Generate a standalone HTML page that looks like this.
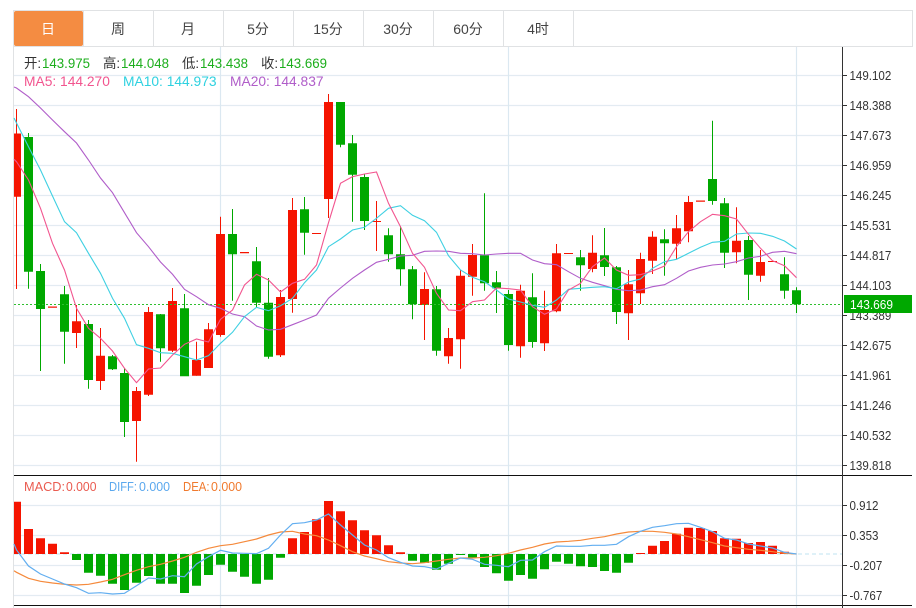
<!DOCTYPE html>
<html><head><meta charset="utf-8"><style>
html,body{margin:0;padding:0;background:#fff;width:916px;height:608px;overflow:hidden}
svg{position:absolute;left:0;top:0;display:block}
text{font-family:"Liberation Sans","Noto Sans CJK SC",sans-serif}
.tab{font-size:14px;fill:#444;text-anchor:middle;font-family:"Liberation Sans","Noto Sans CJK SC",sans-serif}
.ax{font-size:13px;fill:#333}
.h{font-size:13.4px;fill:#333}
.g{font-size:14px;fill:#1cae1c}
.m{font-size:13.8px}
.d{font-size:13px}
</style></head><body>
<svg width="916" height="608" viewBox="0 0 916 608" xmlns="http://www.w3.org/2000/svg">
<rect x="13" y="10" width="900" height="37" fill="#fff"/>
<path d="M13.5 10V608M13 10.5H912.5V46.5H13M83.5 10V46M153.5 10V46M223.5 10V46M293.5 10V46M363.5 10V46M433.5 10V46M503.5 10V46M573.5 10V46" fill="none" stroke="#e0e2e4"/>
<rect x="14" y="11" width="69" height="35" rx="2" fill="#f48c42"/>
<text class="tab" x="48" y="34" style="fill:#fff">日</text>
<text class="tab" x="118" y="34">周</text>
<text class="tab" x="188" y="34">月</text>
<text class="tab" x="258" y="34">5分</text>
<text class="tab" x="328" y="34">15分</text>
<text class="tab" x="398" y="34">30分</text>
<text class="tab" x="468" y="34">60分</text>
<text class="tab" x="538" y="34">4时</text>

<path d="M14 75.5H842M14 105.5H842M14 135.5H842M14 165.5H842M14 195.5H842M14 225.5H842M14 255.5H842M14 285.5H842M14 315.5H842M14 345.5H842M14 375.5H842M14 405.5H842M14 435.5H842M14 465.5H842M14 505.5H842M14 535.5H842M14 565.5H842M14 595.5H842" stroke="#e3ebf2" stroke-width="1.2" fill="none"/>
<path d="M220.5 47V608M508.5 47V608M796.5 47V608" stroke="#dbe8f1" stroke-width="1.2" fill="none"/>

<text class="h" x="24" y="68">开:</text><text class="g" x="42" y="68" textLength="48" lengthAdjust="spacingAndGlyphs">143.975</text>
<text class="h" x="103" y="68">高:</text><text class="g" x="121" y="68" textLength="48" lengthAdjust="spacingAndGlyphs">144.048</text>
<text class="h" x="182" y="68">低:</text><text class="g" x="200" y="68" textLength="48" lengthAdjust="spacingAndGlyphs">143.438</text>
<text class="h" x="261" y="68">收:</text><text class="g" x="279" y="68" textLength="48" lengthAdjust="spacingAndGlyphs">143.669</text>
<text class="m" x="24" y="86" fill="#f2558f">MA5: 144.270</text>
<text class="m" x="123" y="86" fill="#2ed1e0">MA10: 144.973</text>
<text class="m" x="230" y="86" fill="#b05dc9">MA20: 144.837</text>

<path fill="none" stroke="#f51400" d="M16.5 109V289M76.5 305V348M100.5 328V390M136.5 387V461.7M148.5 307V396M172.5 288V352M196.5 341.7V375.7M208.5 323V368M220.5 216.7V336.7M280.5 290V357M292.5 198V312.7M328.5 94V218M376.5 201V251M424.5 272.3V340M448.5 328V363.7M460.5 270V368.7M472.5 244V295.7M520.5 284.7V357.7M544.5 290.7V351M556.5 244V312.3M592.5 235.3V272.3M628.5 270V340M640.5 252.7V304M652.5 231.3V274M676.5 215V259M688.5 196V242.3M736.5 207.3V263.3M760.5 250V281.7"/>
<path fill="#f51400" d="M14 133.5H21V196.7H14zM72 321.3h9V333h-9zM96 355.7h9V381h-9zM132 391h9V421h-9zM144 312h9V394.7h-9zM168 301h9V350.7h-9zM192 360h9V375.7h-9zM204 329.3h9V368h-9zM216 234h9V335h-9zM276 297h9V355.3h-9zM288 210h9V299h-9zM324 102h9V199h-9zM420 289h9V305h-9zM444 338h9V356.3h-9zM456 275.7h9V339.3h-9zM468 255h9V276.7h-9zM516 290.7h9V346.3h-9zM540 310h9V343.3h-9zM552 253.3h9V311.3h-9zM588 252.7h9V269h-9zM624 284.3h9V313.3h-9zM636 259h9V293.3h-9zM648 236.7h9V260.7h-9zM672 228.3h9V243.7h-9zM684 202h9V231.3h-9zM732 240.7h9V252.3h-9zM756 262h9V275.7h-9zM48 306.5h9V307.8h-9zM240 252h9V253.2h-9zM312 233h9V234h-9zM372 221h9V222h-9zM564 253h9V254h-9zM696 200.5h9V201.8h-9zM768 261h9V262h-9z"/>
<path fill="none" stroke="#00a800" d="M28.5 133V288.7M40.5 264V371M64.5 286V363.7M88.5 320V388.7M112.5 355V370M124.5 368V437M160.5 314V361.7M184.5 294V376M232.5 209V300.7M256.5 247V308M268.5 278V358.7M304.5 197V254.7M340.5 102V147.3M352.5 135V221.7M364.5 174V230M388.5 228.3V261.7M400.5 226V285.7M412.5 266V319.3M436.5 286V355.7M484.5 193.3V290.7M496.5 271V313M508.5 290V350.7M532.5 273.3V347.7M580.5 250V290.7M604.5 228V276M616.5 266V324M664.5 229.3V275.7M712.5 120.7V204.7M724.5 198V268M748.5 236V300M784.5 257.3V298.7M796.5 287.3V313"/>
<path fill="#00a800" d="M24 137h9V271.7h-9zM36 271h9V309h-9zM60 294.3h9V331.7h-9zM84 324h9V380h-9zM108 356.3h9V369.3h-9zM120 373h9V422h-9zM156 314.3h9V348.3h-9zM180 308.3h9V376.3h-9zM228 234h9V254.3h-9zM252 261.3h9V302.7h-9zM264 302.7h9V356.7h-9zM300 209.3h9V232.7h-9zM336 102h9V144.7h-9zM348 143.3h9V174.7h-9zM360 177h9V221h-9zM384 235.3h9V254.3h-9zM396 254.3h9V269.3h-9zM408 269.3h9V304.3h-9zM432 289.3h9V350.7h-9zM480 255.3h9V283.3h-9zM492 282.3h9V288.3h-9zM504 294h9V345h-9zM528 297.3h9V342h-9zM576 257.3h9V265.3h-9zM600 255.3h9V267h-9zM612 267.3h9V312h-9zM660 239.3h9V243.3h-9zM708 179h9V201h-9zM720 203.3h9V252.7h-9zM744 240h9V274.7h-9zM780 274.3h9V290.7h-9zM792 290.3h9V304.3h-9z"/>

<path d="M14 304.5H842" stroke="#2fbf2f" stroke-dasharray="2 2" fill="none"/>

<polyline fill="none" stroke="#b05dc9" stroke-width="1.1" points="14,87 16.5,88 28.5,96.7 40.5,108 52.5,120 64.5,131.7 76.5,143 88.5,160 100.5,178 112.5,192.7 124.5,212.7 136.5,232.7 148.5,246.7 160.5,262 172.5,274.3 184.5,289.3 196.5,296.7 208.5,304.7 220.5,308.3 232.5,314 244.5,316.7 256.5,326 268.5,330 280.5,329.3 292.5,324.7 304.5,320 316.5,315 328.5,298.3 340.5,288 352.5,278.3 364.5,270 376.5,262.3 388.5,259.3 400.5,256 412.5,255.3 424.5,251.3 436.5,251 448.5,251.3 460.5,253.3 472.5,253.7 484.5,255 496.5,254 508.5,253.3 520.5,253.3 532.5,260 544.5,263.7 556.5,264.7 568.5,271.7 580.5,278.3 592.5,282.3 604.5,285.7 616.5,289.3 628.5,290.7 640.5,290 652.5,286.7 664.5,284.7 676.5,278.3 688.5,271 700.5,267.3 712.5,265 724.5,264 736.5,261.7 748.5,258 760.5,256.3 772.5,252.3 784.5,251.3 796.5,253.7"/>
<polyline fill="none" stroke="#3fd0e2" stroke-width="1.1" points="14,118 16.5,123 28.5,146.7 40.5,170 52.5,196 64.5,221.7 76.5,232.7 88.5,253.3 100.5,273.3 112.5,298.3 124.5,318.3 136.5,344.7 148.5,348.3 160.5,352.7 172.5,353.3 184.5,356.7 196.5,360 208.5,355.7 220.5,343.3 232.5,332.3 244.5,316.7 256.5,307.3 268.5,310.7 280.5,305.7 292.5,298.3 304.5,282.7 316.5,270 328.5,246.7 340.5,239 352.5,230 364.5,227.3 376.5,218.3 388.5,208.3 400.5,205.7 412.5,215.3 424.5,220.7 436.5,232.3 448.5,255.7 460.5,270 472.5,277.3 484.5,281.7 496.5,290 508.5,299 520.5,302 532.5,305.3 544.5,307.3 556.5,300 568.5,289.3 580.5,288.3 592.5,287.3 604.5,286.7 616.5,288.7 628.5,282 640.5,279 652.5,268.3 664.5,261.7 676.5,259.3 688.5,253.3 700.5,247.3 712.5,242.3 724.5,241.3 736.5,234 748.5,233 760.5,233.3 772.5,236.3 784.5,241 796.5,249"/>
<polyline fill="none" stroke="#f2558f" stroke-width="1.1" points="14,159.3 16.5,161.7 28.5,180 40.5,208.3 52.5,243.3 64.5,270 76.5,308.3 88.5,328.3 100.5,338.3 112.5,351 124.5,368.3 136.5,382.7 148.5,369 160.5,368 172.5,355 184.5,344.3 196.5,339 208.5,342 220.5,319.3 232.5,310 244.5,285 256.5,274.3 268.5,280 280.5,292 292.5,283.3 304.5,279.3 316.5,265 328.5,222.7 340.5,183.3 352.5,176.7 364.5,174 376.5,172 388.5,203.3 400.5,226.7 412.5,253.3 424.5,267.3 436.5,293.3 448.5,310 460.5,310.7 472.5,301.7 484.5,300 496.5,288 508.5,288.7 520.5,290 532.5,306.7 544.5,314.3 556.5,309 568.5,290 580.5,283.3 592.5,266.7 604.5,258 616.5,270 628.5,275.3 640.5,274.7 652.5,271 664.5,266 676.5,246.7 688.5,231.7 700.5,221.7 712.5,214.3 724.5,215.7 736.5,219 748.5,234.3 760.5,248.3 772.5,260.7 784.5,265.7 796.5,277.7"/>

<path d="M14 554H842" stroke="#bfe3f0" stroke-dasharray="4 3" fill="none"/>
<path fill="#f51400" d="M14 501.7H21V554H14zM24 529h9V554h-9zM36 538.3h9V554h-9zM48 543.7h9V554h-9zM60 552.3h9V554h-9zM288 538.3h9V554h-9zM300 532h9V554h-9zM312 519.3h9V554h-9zM324 501h9V554h-9zM336 511.3h9V554h-9zM348 520.3h9V554h-9zM360 530.3h9V554h-9zM372 535.3h9V554h-9zM384 545.3h9V554h-9zM396 552.3h9V554h-9zM636 553h9V554h-9zM648 545.7h9V554h-9zM660 541h9V554h-9zM672 533.7h9V554h-9zM684 527.7h9V554h-9zM696 528h9V554h-9zM708 531h9V554h-9zM720 538.3h9V554h-9zM732 538.7h9V554h-9zM744 543h9V554h-9zM756 542h9V554h-9zM768 545.7h9V554h-9zM780 551.7h9V554h-9z"/>
<path fill="#00a800" d="M72 554h9V560h-9zM84 554h9V572.7h-9zM96 554h9V575.7h-9zM108 554h9V583.7h-9zM120 554h9V590h-9zM132 554h9V582.7h-9zM144 554h9V576h-9zM156 554h9V583.7h-9zM168 554h9V583.7h-9zM180 554h9V593h-9zM192 554h9V585.7h-9zM204 554h9V575h-9zM216 554h9V564.7h-9zM228 554h9V571.7h-9zM240 554h9V576.7h-9zM252 554h9V583.7h-9zM264 554h9V579.7h-9zM276 554h9V557.7h-9zM408 554h9V560.7h-9zM420 554h9V563h-9zM432 554h9V569.7h-9zM444 554h9V563.7h-9zM456 554h9V555h-9zM468 554h9V557.7h-9zM480 554h9V567h-9zM492 554h9V573.3h-9zM504 554h9V580.7h-9zM516 554h9V575h-9zM528 554h9V578.7h-9zM540 554h9V569.3h-9zM552 554h9V561.7h-9zM564 554h9V563.7h-9zM576 554h9V566.3h-9zM588 554h9V567h-9zM600 554h9V571h-9zM612 554h9V572.7h-9zM624 554h9V562.7h-9z"/>
<polyline fill="none" stroke="#f58a3c" stroke-width="1.2" points="14,570.7 16.5,572.3 28.5,578.3 40.5,581.3 52.5,583 64.5,584.3 76.5,585 88.5,584.3 100.5,582 112.5,579.3 124.5,574.7 136.5,570.3 148.5,566.7 160.5,564.3 172.5,561 184.5,557.3 196.5,552.3 208.5,548.3 220.5,545.7 232.5,544.3 244.5,541.7 256.5,539 268.5,535 280.5,532 292.5,531.3 304.5,534 316.5,535.7 328.5,540 340.5,545.7 352.5,551.7 364.5,556 376.5,558.7 388.5,561.7 400.5,563 412.5,563.7 424.5,562.7 436.5,561 448.5,559.3 460.5,558 472.5,558 484.5,557.3 496.5,555.7 508.5,553.3 520.5,550 532.5,547.3 544.5,544 556.5,542 568.5,541.3 580.5,540.3 592.5,538.3 604.5,536.7 616.5,534 628.5,532 640.5,531.3 652.5,531.3 664.5,532.3 676.5,534 688.5,536.7 700.5,539.7 712.5,542.7 724.5,546 736.5,547.7 748.5,549.3 760.5,550.3 772.5,551.7 784.5,553.3 796.5,554"/>
<polyline fill="none" stroke="#62aef0" stroke-width="1.2" points="14,544 16.5,550 28.5,566 40.5,574 52.5,579 64.5,584 76.5,587.7 88.5,593.3 100.5,592.7 112.5,594 124.5,593.3 136.5,585.7 148.5,578 160.5,579 172.5,575.7 184.5,576.7 196.5,564 208.5,556.7 220.5,550.3 232.5,553 244.5,553.3 256.5,553.7 268.5,548.3 280.5,535 292.5,523.7 304.5,522.7 316.5,520 328.5,514 340.5,525 352.5,535 364.5,545 376.5,550 388.5,557.7 400.5,562.3 412.5,566 424.5,566.7 436.5,569 448.5,563.3 460.5,558 472.5,559.3 484.5,564.3 496.5,565.3 508.5,566.7 520.5,560.3 532.5,560 544.5,551.7 556.5,546 568.5,546.3 580.5,546.3 592.5,545.3 604.5,545.3 616.5,544.3 628.5,536.7 640.5,531.3 652.5,527.3 664.5,525.7 676.5,523.7 688.5,523.3 700.5,527.3 712.5,531.7 724.5,538.3 736.5,540 748.5,544 760.5,546 772.5,548 784.5,552.3 796.5,554"/>

<path d="M14 475.5H912M14 605.5H912" stroke="#111" fill="none"/>
<text class="d" x="24" y="491" fill="#ea5b50" textLength="41" lengthAdjust="spacingAndGlyphs">MACD:</text><text class="d" x="66" y="491" fill="#ea5b50" textLength="30.5" lengthAdjust="spacingAndGlyphs">0.000</text>
<text class="d" x="109" y="491" fill="#5ba8ee" textLength="28" lengthAdjust="spacingAndGlyphs">DIFF:</text><text class="d" x="139" y="491" fill="#5ba8ee" textLength="31" lengthAdjust="spacingAndGlyphs">0.000</text>
<text class="d" x="183" y="491" fill="#f07a2e" textLength="26.5" lengthAdjust="spacingAndGlyphs">DEA:</text><text class="d" x="211" y="491" fill="#f07a2e" textLength="31" lengthAdjust="spacingAndGlyphs">0.000</text>

<path d="M842.5 47V608" stroke="#333" fill="none"/>
<path d="M842 75.5h5M842 105.5h5M842 135.5h5M842 165.5h5M842 195.5h5M842 225.5h5M842 255.5h5M842 285.5h5M842 315.5h5M842 345.5h5M842 375.5h5M842 405.5h5M842 435.5h5M842 465.5h5M842 505.5h5M842 535.5h5M842 565.5h5M842 595.5h5" stroke="#333" fill="none"/>
<g transform="translate(849.5 0) scale(.89 1)">
<text class="ax" x="0" y="80">149.102</text>
<text class="ax" x="0" y="110">148.388</text>
<text class="ax" x="0" y="140">147.673</text>
<text class="ax" x="0" y="170">146.959</text>
<text class="ax" x="0" y="200">146.245</text>
<text class="ax" x="0" y="230">145.531</text>
<text class="ax" x="0" y="260">144.817</text>
<text class="ax" x="0" y="290">144.103</text>
<text class="ax" x="0" y="320">143.389</text>
<text class="ax" x="0" y="350">142.675</text>
<text class="ax" x="0" y="380">141.961</text>
<text class="ax" x="0" y="410">141.246</text>
<text class="ax" x="0" y="440">140.532</text>
<text class="ax" x="0" y="470">139.818</text>
<text class="ax" x="0" y="510">0.912</text>
<text class="ax" x="0" y="540">0.353</text>
<text class="ax" x="0" y="570">-0.207</text>
<text class="ax" x="0" y="600">-0.767</text>
</g>
<rect x="844" y="295" width="68" height="18" fill="#00a800"/>
<text x="850" y="309" style="font-size:13px;fill:#fff" textLength="43" lengthAdjust="spacingAndGlyphs">143.669</text>
</svg>
</body></html>
